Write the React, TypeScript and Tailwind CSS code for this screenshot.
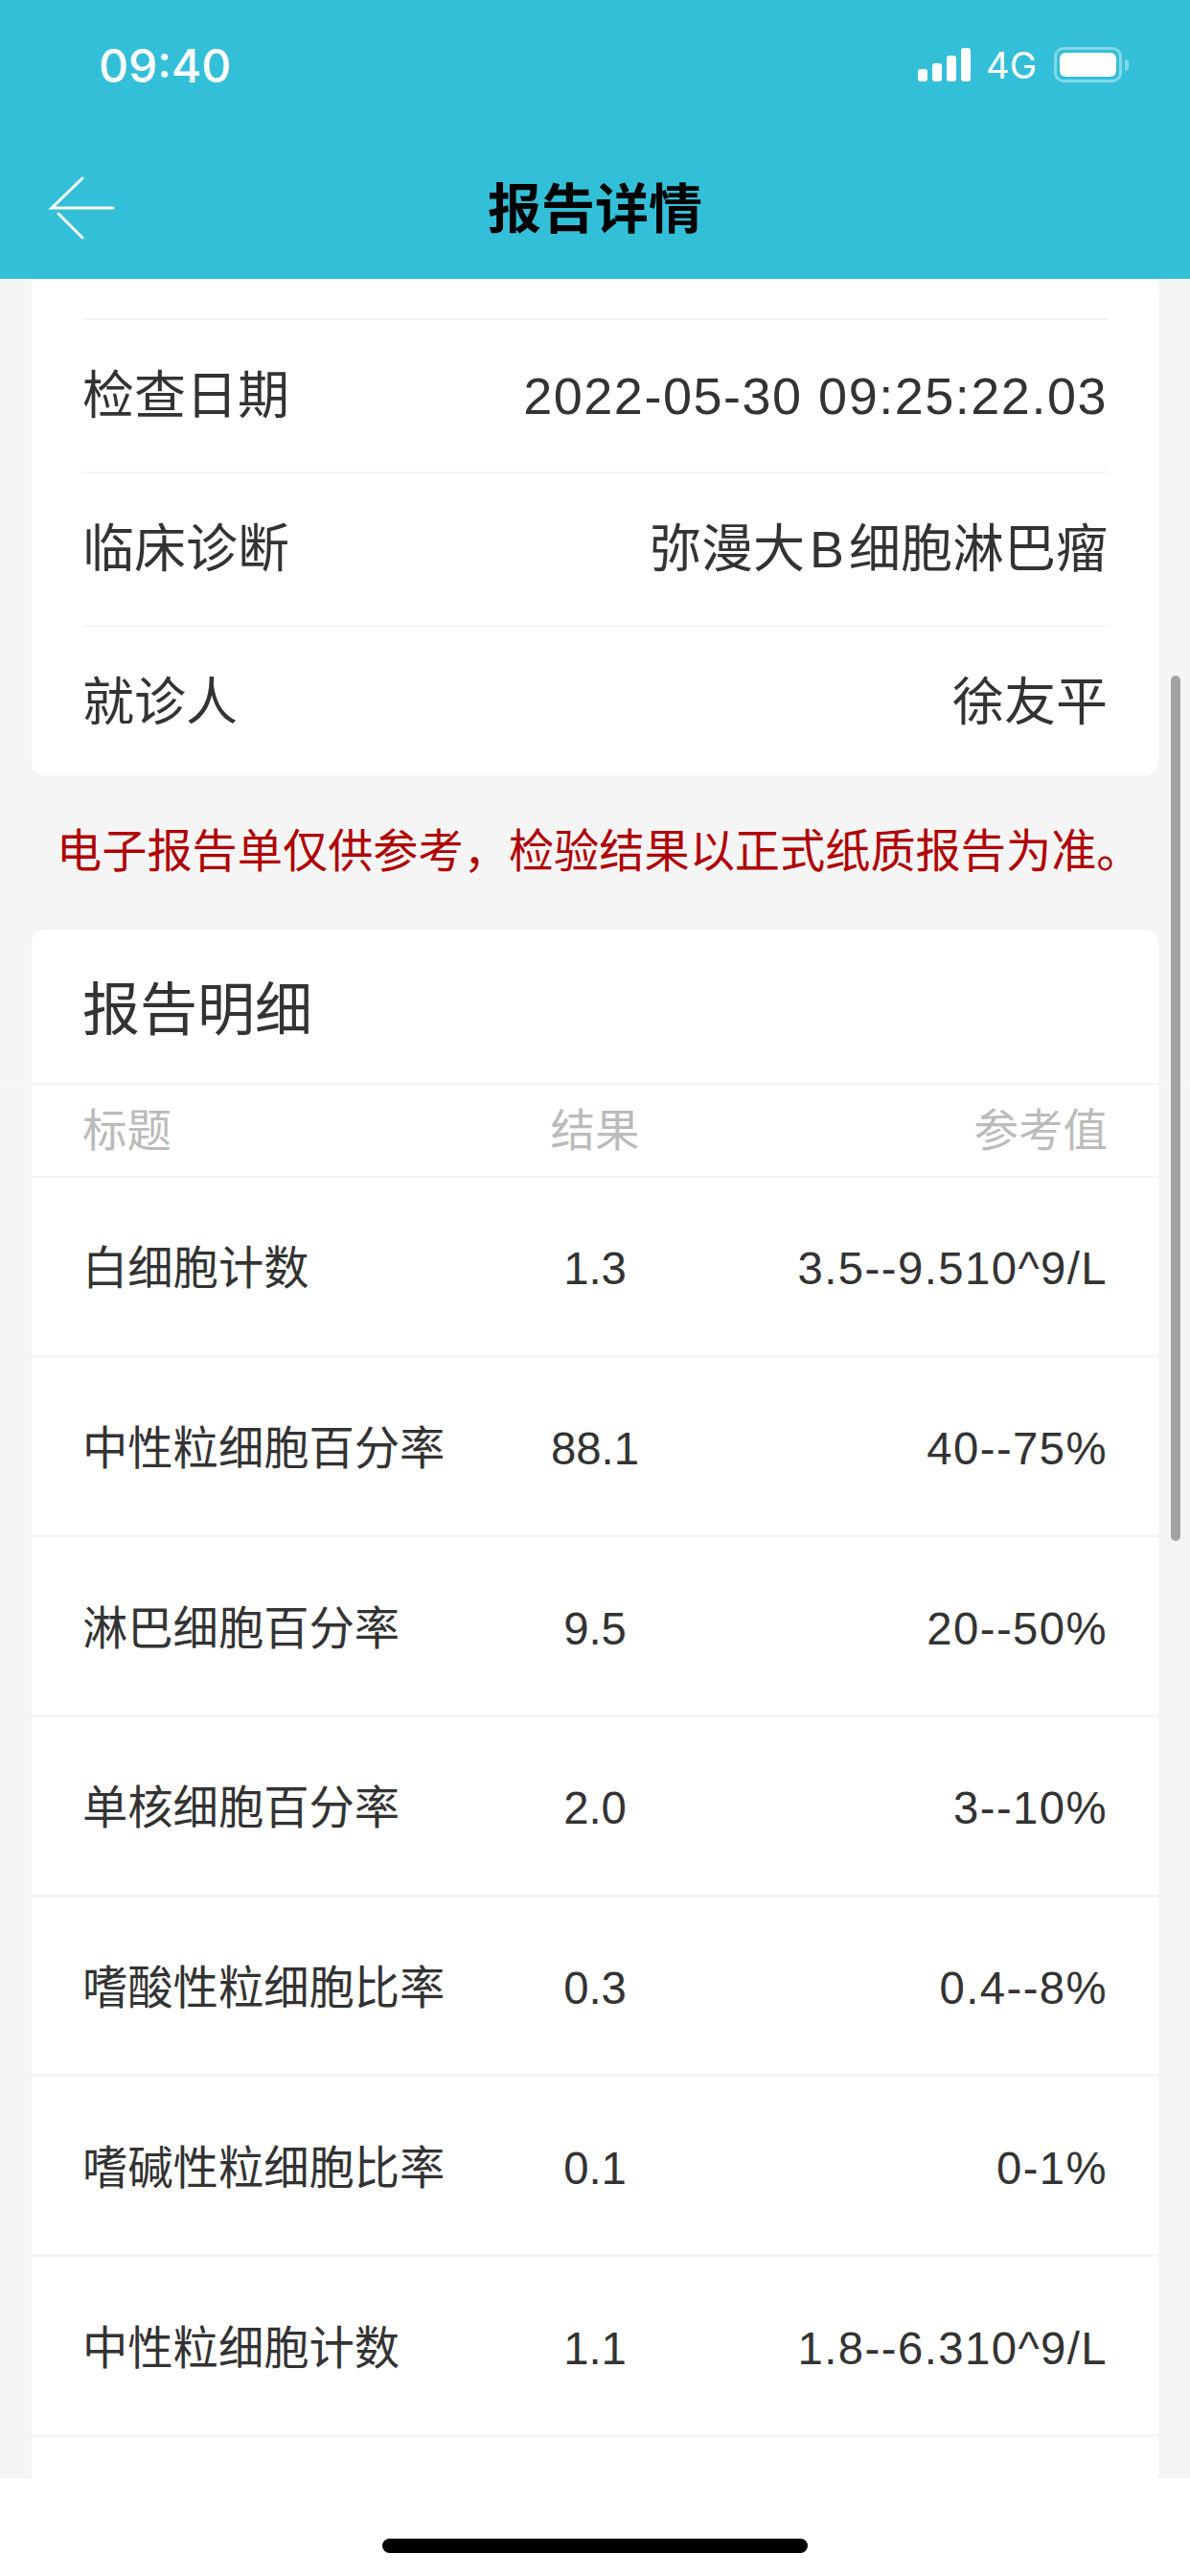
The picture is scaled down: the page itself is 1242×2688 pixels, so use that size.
const FONT = "font-['Liberation_Sans','Noto_Sans_CJK_SC',sans-serif]";

const rows = [
  ["白细胞计数", "1.3", "3.5--9.510^9/L"],
  ["中性粒细胞百分率", "88.1", "40--75%"],
  ["淋巴细胞百分率", "9.5", "20--50%"],
  ["单核细胞百分率", "2.0", "3--10%"],
  ["嗜酸性粒细胞比率", "0.3", "0.4--8%"],
  ["嗜碱性粒细胞比率", "0.1", "0-1%"],
  ["中性粒细胞计数", "1.1", "1.8--6.310^9/L"],
];

function StatusIcons() {
  return (
    <div className="flex items-center">
      <div className="flex items-end gap-[4.5px] h-[35px] translate-x-[1px]">
        <div className="w-[10.5px] h-[13px] rounded-[3px] bg-white" />
        <div className="w-[10.5px] h-[19px] rounded-[3px] bg-white" />
        <div className="w-[10.5px] h-[27px] rounded-[3px] bg-white" />
        <div className="w-[10.5px] h-[35px] rounded-[3px] bg-white" />
      </div>
      <span className="ml-[17px] font-['Inter',sans-serif] text-[38px] leading-[40px] text-white">4G</span>
      <div className="ml-[18px] flex items-center">
        <div className="w-[71px] h-[37px] rounded-[10px] border-[3px] border-white/40 p-[3px]">
          <div className="w-full h-full rounded-[6px] bg-white" />
        </div>
        <div className="ml-[3px] w-[4px] h-[12px] rounded-r-[4px] bg-white/40" />
      </div>
    </div>
  );
}

function InfoRow({ label, children }: { label: string; children: React.ReactNode }) {
  return (
    <div className="flex items-center justify-between h-[160px] border-t-2 border-[#f5f5f5] text-[#333] text-[54px]">
      <span>{label}</span>
      {children}
    </div>
  );
}

export default function App() {
  return (
    <div className={`relative flex flex-col w-[1242px] h-[2688px] overflow-hidden bg-[#f5f5f5] ${FONT}`}>
      <header className="flex flex-col h-[291px] shrink-0 bg-[#33bfd8]">
        <div className="flex items-center justify-between h-[135px] pl-[103px] pr-[64px]">
          <span className="font-['Inter',sans-serif] text-[48px] leading-none font-medium text-white translate-y-[1px]">09:40</span>
          <StatusIcons />
        </div>
        <div className="relative flex items-center justify-center h-[156px] pt-[12px]">
          <svg className="absolute left-[50px] top-[49px]" width="72" height="66" viewBox="0 0 72 66" fill="none" stroke="white" strokeWidth="3" strokeLinecap="round">
            <path d="M36 2 L4 33 H68" />
            <path d="M11 39 L36 64" />
          </svg>
          <h1 className="text-[56px] leading-none font-bold text-black">报告详情</h1>
        </div>
      </header>

      <main className="flex-1 mx-[33px] flex flex-col overflow-hidden">
        <section className="bg-white rounded-b-[14px] px-[53px] pt-[41px] h-[518px] shrink-0">
          <InfoRow label="检查日期">
            <span className="tracking-[0.028em]">2022-05-30 09:25:22.03</span>
          </InfoRow>
          <InfoRow label="临床诊断">
            <span>
              弥漫大<span className="mx-[5px]">B</span>细胞淋巴瘤
            </span>
          </InfoRow>
          <InfoRow label="就诊人">
            <span>徐友平</span>
          </InfoRow>
        </section>

        <p className="flex items-center h-[161px] shrink-0 pl-[26px] text-[47.2px] text-[#b00000] whitespace-nowrap">
          电子报告单仅供参考，检验结果以正式纸质报告为准。
        </p>

        <section className="flex-1 bg-white rounded-t-[14px]">
          <div className="flex items-center h-[160px] pt-[9px] px-[53px] text-[60px] text-[#333]">报告明细</div>
          <div className="grid grid-cols-3 items-center h-[99px] pt-[2px] px-[53px] border-y-2 border-[#f5f5f5] text-[46.5px] text-[#bbb]">
            <span>标题</span>
            <span className="text-center">结果</span>
            <span className="text-right">参考值</span>
          </div>
          {rows.map((row) => (
            <div key={row[0]} className="grid grid-cols-[1fr_180px_1fr] items-center h-[187.7px] pt-[7px] px-[53px] border-b-[3px] border-[#f5f5f5] text-[47.3px] text-[#333]">
              <span className="whitespace-nowrap">{row[0]}</span>
              <span className="text-center">{row[1]}</span>
              <span className="text-right whitespace-nowrap tracking-[0.03em]">{row[2]}</span>
            </div>
          ))}
        </section>
      </main>

      <footer className="flex justify-center h-[102px] shrink-0 pt-[63px] bg-white">
        <div className="w-[444px] h-[15px] rounded-full bg-black" />
      </footer>

      <div className="absolute left-0 right-0 top-[1129px] h-[1px] bg-[#f9f9f9]" />
      <div className="absolute left-[1222px] top-[705px] w-[10px] h-[903px] rounded-full bg-[#a3a3a3]" />
    </div>
  );
}
